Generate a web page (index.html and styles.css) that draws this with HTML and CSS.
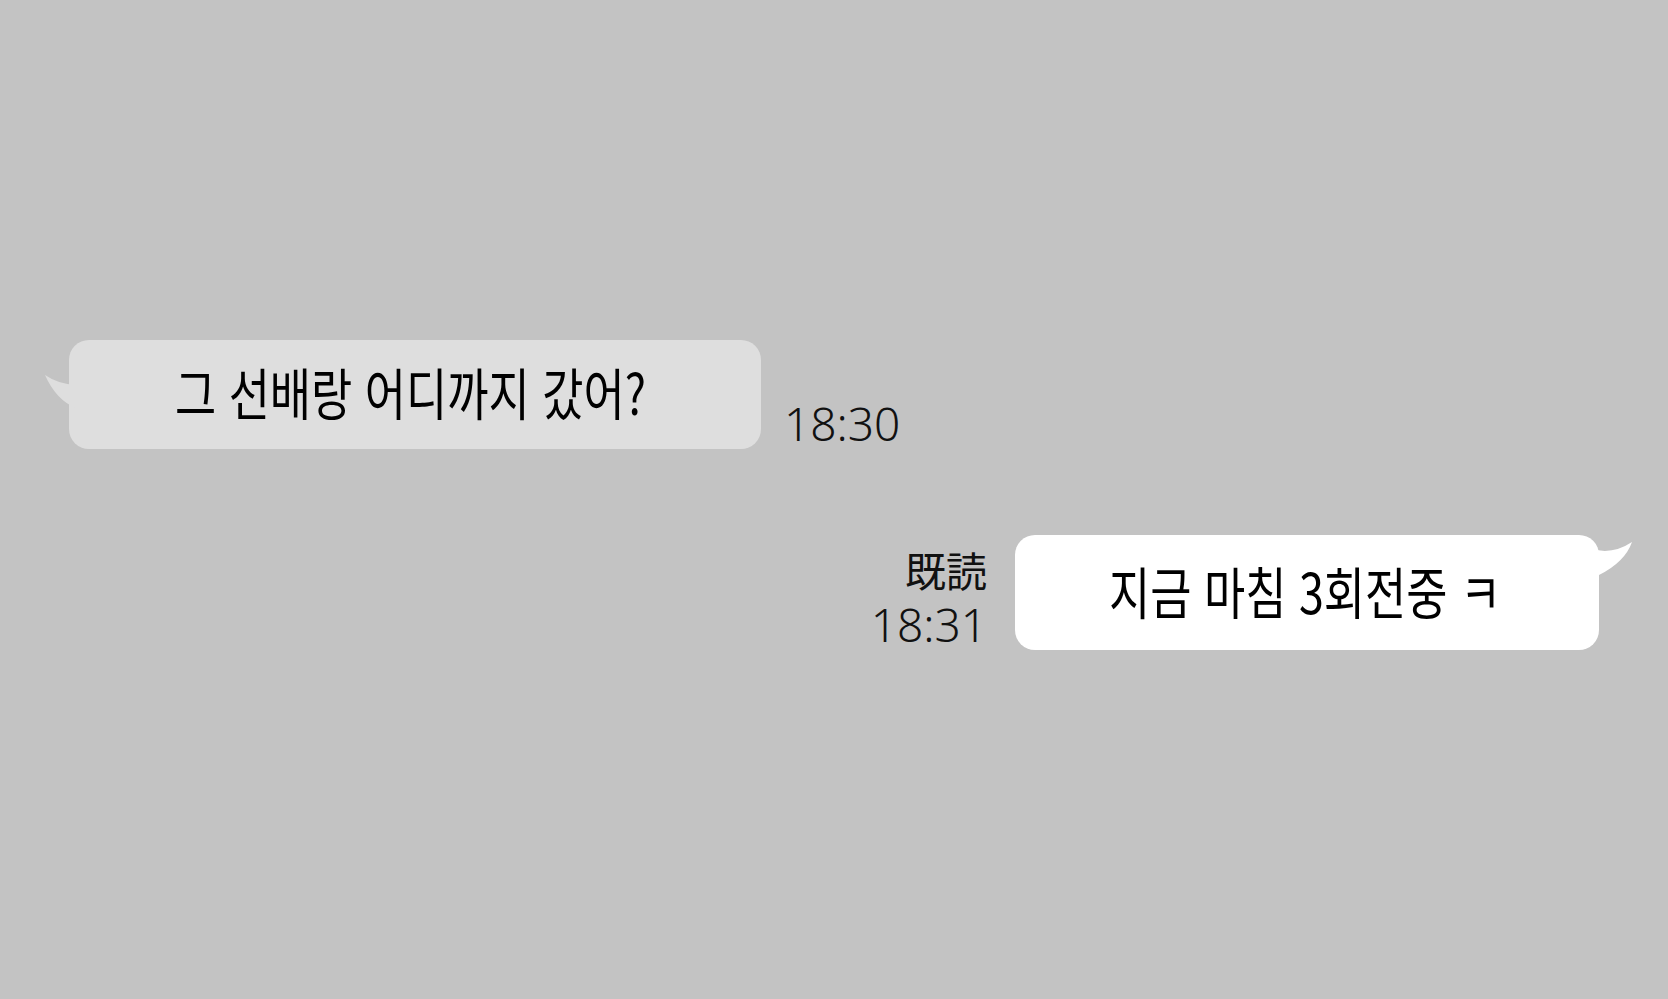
FILE: index.html
```html
<!DOCTYPE html>
<html lang="ko">
<head>
<meta charset="utf-8">
<title>Chat</title>
<link rel="stylesheet" href="styles.css">
</head>
<body>
<div class="chat">
  <div class="row row-in">
    <div class="bubble bubble-in">
      <svg class="tail tail-in" width="34" height="44" viewBox="0 0 34 44"><path d="M3,7 Q16,16 34,17 L34,40 Q14,32 3,7 Z" fill="#dedede"/></svg>
      <span class="msg msg-in">그 선배랑 어디까지 갔어?</span>
    </div>
    <div class="time time-in">18:30</div>
  </div>
  <div class="row row-out">
    <div class="meta">
      <div class="read">既読</div>
      <div class="time">18:31</div>
    </div>
    <div class="bubble bubble-out">
      <svg class="tail tail-out" width="60" height="50" viewBox="0 0 60 50"><path d="M4,18 L10,18 Q32,26 53,12 Q46,32 20,45 L4,45 Z" fill="#ffffff"/></svg>
      <span class="msg msg-out">지금 마침 3회전중 ㅋ</span>
    </div>
  </div>
</div>
</body>
</html>
```
FILE: styles.css
```css
html, body {
  margin: 0;
  padding: 0;
}
body {
  background: #c3c3c3;
  width: 1668px;
  height: 999px;
  overflow: hidden;
  font-family: "Noto Sans CJK KR", "Noto Sans CJK JP", sans-serif;
  color: #000;
}
.chat {
  display: flex;
  flex-direction: column;
  padding: 340px 69px 0 69px;
}
.row {
  display: flex;
  align-items: flex-end;
}
.row-out {
  margin-top: 86px;
  justify-content: flex-end;
}
.bubble {
  position: relative;
  display: flex;
  align-items: center;
  justify-content: center;
  border-radius: 20px;
}
.bubble-in {
  width: 692px;
  height: 109px;
  background: #dedede;
}
.bubble-out {
  width: 584px;
  height: 115px;
  background: #ffffff;
}
.tail {
  position: absolute;
}
.tail-in {
  left: -27px;
  top: 28px;
}
.tail-out {
  right: -40px;
  top: -5px;
}
.msg {
  position: relative;
  display: inline-block;
  font-size: 56px;
  line-height: 1;
  white-space: nowrap;
  font-weight: 400;
  transform: scaleX(0.8);
}
.msg-in {
  top: -4px;
  left: -5px;
}
.msg-out {
  top: -3px;
  left: -2px;
}
.time {
  font-family: "Noto Sans", "Open Sans", sans-serif;
  font-weight: 300;
  font-size: 46px;
  line-height: 1;
  color: #111;
}
.time-in {
  margin-left: 23px;
  margin-bottom: 3px;
}
.meta {
  display: flex;
  flex-direction: column;
  align-items: flex-end;
  margin-right: 28px;
  margin-bottom: 3px;
}
.read {
  font-family: "Noto Sans CJK JP", sans-serif;
  font-size: 41px;
  line-height: 44px;
  margin-bottom: 10px;
  color: #111;
}
```
